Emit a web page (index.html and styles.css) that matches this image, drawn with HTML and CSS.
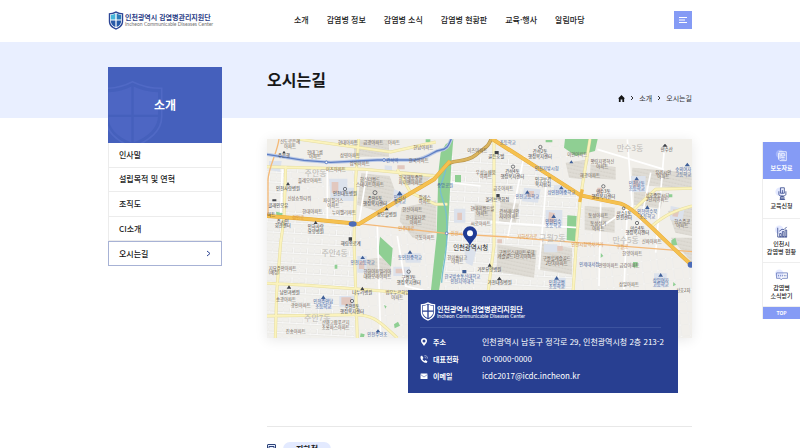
FILE: index.html
```html
<!DOCTYPE html>
<html lang="ko">
<head>
<meta charset="utf-8">
<meta name="viewport" content="width=device-width, initial-scale=1">
<title>오시는길 - 인천광역시 감염병관리지원단</title>
<link rel="stylesheet" href="styles.css">
</head>
<body>
<header class="header">
  <div class="container header-inner">
    <a class="logo" href="#">
      <svg class="logo-mark" viewBox="0 0 48 58" aria-hidden="true">
        <path d="M24 1C17 5 9 7 2 7v24c0 13 9 21 22 26 13-5 22-13 22-26V7C39 7 31 5 24 1z" fill="#2c4596"/>
        <path d="M24 5C18 8 12 10 6 10v20c0 11 7 18 18 23 11-5 18-12 18-23V10C36 10 30 8 24 5z" fill="#fff"/>
        <path d="M22 8C18 10 13 12 8 12v14h14z" fill="#45b5d9"/>
        <path d="M26 8c4 2 9 4 14 4v14H26z" fill="#2d7cba"/>
        <path d="M8 29h14v20C13 45 8 38 8 29z" fill="#2a5aa8"/>
        <path d="M26 29h14c0 9-5 16-14 20z" fill="#2459a8"/>
      </svg>
      <span class="logo-text"><strong>인천광역시 감염병관리지원단</strong><small>Incheon Communicable Diseases Center</small></span>
    </a>
    <nav class="gnb" aria-label="주메뉴">
      <a href="#">소개</a>
      <a href="#">감염병 정보</a>
      <a href="#">감염병 소식</a>
      <a href="#">감염병 현황판</a>
      <a href="#">교육·행사</a>
      <a href="#">알림마당</a>
    </nav>
    <button class="menu-button" type="button" aria-label="전체메뉴">
      <svg viewBox="0 0 18 18" aria-hidden="true"><path d="M5 6.500h8M5 9h6M5 11.500h8" stroke="#fff" fill="none"/></svg>
    </button>
  </div>
</header>

<div class="page">
  <div class="container columns">
    <aside class="side">
      <h2 class="side-title">
        <svg class="side-shield" viewBox="0 0 170 190" aria-hidden="true">
          <path d="M73 5C50 17 22 25-8 25v85c0 45 30 72 81 94 51-22 88-49 88-94V25C128 25 97 17 73 5z" fill="none" stroke="#5069c5" stroke-width="5"/>
          <path d="M73 18C52 29 27 36 0 37v69c0 38 24 64 73 84 49-20 77-46 77-84V37C120 36 96 29 73 18z" fill="#4d66c3"/>
          <path d="M73 18v180M0 108h150" stroke="#4560bc" stroke-width="7"/>
        </svg>
        <span>소개</span>
      </h2>
      <ul class="side-menu">
        <li><a href="#">인사말</a></li>
        <li><a href="#">설립목적 및 연혁</a></li>
        <li><a href="#">조직도</a></li>
        <li><a href="#">CI소개</a></li>
        <li><a class="current" href="#" aria-current="page">오시는길
          <svg viewBox="0 0 5 7" aria-hidden="true"><path d="M1 1l3 2.500L1 6" fill="none" stroke="#2e4593"/></svg></a></li>
      </ul>
    </aside>

    <main class="main">
      <div class="page-head">
        <h1>오시는길</h1>
        <nav class="crumbs" aria-label="현재 위치">
          <a href="#" aria-label="홈"><svg class="home" viewBox="0 0 8 8" aria-hidden="true"><path d="M4 0L0 4h1v4h2V5h2v3h2V4h1z" fill="#151515"/></svg></a>
          <svg class="sep" viewBox="0 0 4 6" aria-hidden="true"><path d="M1 1l2 2-2 2" fill="none" stroke="#333"/></svg>
          <a href="#">소개</a>
          <svg class="sep" viewBox="0 0 4 6" aria-hidden="true"><path d="M1 1l2 2-2 2" fill="none" stroke="#333"/></svg>
          <span>오시는길</span>
        </nav>
      </div>

      <svg class="map" viewBox="9 9 1275 597" role="img" aria-label="인천광역시청 주변 지도">
        <defs>
          <pattern id="blocks" width="42" height="30" patternUnits="userSpaceOnUse" patternTransform="rotate(3)">
            <rect width="42" height="30" fill="#f1f0ec"/>
            <path d="M0 0h42M0 0v30M22 0v16M0 16h42" stroke="#dad9d4" stroke-width="5"/>
            <path d="M0 0h42M0 0v30M22 0v16M0 16h42" stroke="#fff" stroke-width="3"/>
          </pattern>
          <pattern id="blocks-tilt" width="46" height="34" patternUnits="userSpaceOnUse" patternTransform="rotate(-7)">
            <rect width="46" height="34" fill="#f1efeb"/>
            <path d="M0 0h46M0 0v34M20 0v34" stroke="#dddbd5" stroke-width="5"/>
            <path d="M0 0h46M0 0v34M20 0v34" stroke="#fff" stroke-width="3"/>
          </pattern>
          <pattern id="estate" width="9" height="11" patternUnits="userSpaceOnUse" patternTransform="rotate(12)">
            <rect width="9" height="11" fill="#dfdcd5"/><rect width="6" height="3" x="1" y="2" fill="#d3cfc7"/>
          </pattern>
        </defs>
        <rect x="9" y="9" width="1275" height="597" fill="#f1efea"/>
        <path d="M9 100H270V606H9z" fill="url(#blocks)"/>
        <path d="M270 270L520 300L500 606H270z" fill="url(#blocks-tilt)"/>
        <path d="M560 60L690 20L960 190L930 460H540z" fill="url(#blocks)"/>
        <path d="M960 190L1080 205L1284 380V606H920z" fill="url(#blocks-tilt)"/>
        <path d="M700 20L905 9L980 90L960 170z" fill="url(#blocks-tilt)"/>
        <path d="M60 110L270 112V230L60 225z" fill="url(#blocks-tilt)"/>
        <g fill="url(#estate)">
          <path d="M292 112l85 8 22 60-60 46-60-20zM405 105l105 8-35 35-55-5zM412 215l105-22v95l-70 18-40-50zM270 12h105v50H270z"/>
          <path d="M905 80l70-10-20 60-40-5zM1105 95l178 15v50l-180-15zM710 195l55 8-10 62-50-10zM962 210l90 5v75l-90-8zM1110 165l90 8-10 45-80-12zM1212 225l72-15v90l-50-10zM632 205l55 8v40h-55z"/>
          <path d="M700 325l118 18-8 82-112-18zM832 322l92 14v80l-95-14zM305 370l72-8 5 55-78 8zM980 85l75 8v38l-78-5zM1220 305h64v75z"/>
        </g>
        <g fill="#dce2ec">
          <path d="M15 75h38l-5 32-33-5zM195 128h55v60h-50zM238 155h36v40h-36zM362 88l22 2v18h-22zM570 218h34v42h-34zM390 160l40 15-30 40-15-15z"/>
          <path d="M780 155l50 5-8 40-48-4zM845 222h50v52h-50zM1100 120h45v48h-48zM1220 210l42 8-8 40-36-6zM870 148h40v28h-42z"/>
          <path d="M280 360h28v50h-28zM388 392h50v28h-50zM165 485h38v34h-38zM226 480h50v32h-50zM870 425h35v30h-35zM1170 412h38v42h-38zM600 330h40l-15 60-20-10zM420 352h50v28h-45zM840 325h40v24h-40z"/>
        </g>
        <g fill="#e2c8bf">
          <path d="M203 138h20v32h-20zM400 88h22v12h-22zM580 230h14v22h-14zM855 228l18 4-3 30-18-4zM1228 220l18 3-5 20-16-2zM790 165h20v18h-20zM1108 132h15v20h-15zM285 375h16v24h-16zM395 398h26v14h-26zM232 484h30v22h-30zM880 330h16v14h-16zM1000 155h14v18h-14zM700 310h14v12h-14z"/>
        </g>
        <g fill="#8fcf93">
          <path d="M530 50L545 25L568 9L562 80L551 300L524 470H500L518 300L523 110z"/>
          <path d="M903 9h98l-8 36-58 15-35-25zM910 238l28 2-4 76-26-4zM348 302l38 35-5 55-38-40z"/>
          <path d="M573 117h18v22h-18zM36 227l20 4-2 14h-16zM485 10h14v8h-14zM1222 313l12-8 6 22-18 2zM845 12h20v7h-20zM212 386h8v12h-8zM390 565l12-8 6 12-16 8zM1107 378h14v16h-14zM360 507l8 4-4 7zM1215 175h10v9h-10zM290 592l12 3-2 8h-12zM1228 438l8 8-9 5zM1010 350l8 10-9 6z"/>
        </g>
        <g fill="none" stroke="#fff" stroke-width="5">
          <path d="M55 100l-5 130M190 95v155M310 100l-25 160M340 270l10 340M400 300l25 150 80 20M560 140l90 10M640 255l300 20M780 60l-50 250M850 100l-25 300M1000 40l200 60M1090 10l15 200-90 60M1160 110l-30 150M1200 50l-25 300M1010 200l-5 250M1090 220l-10 240"/>
        </g>
        <g fill="none" stroke="#e5dda1" stroke-width="9">
          <path d="M284 9L275 130L270 315L280 606M65 90L60 250L50 320L38 470L34 606M100 9L380 48L515 18M9 92L300 100L515 120M9 442L130 448L270 458L440 472M9 540L270 536C330 535 350 560 400 606M400 100L440 170L515 205L550 205"/>
          <path d="M690 9V330L672 470M978 9L950 180L937 320L927 470M1284 157L1175 160L1110 220M1284 210C1230 225 1205 235 1158 275"/>
        </g>
        <g fill="none" stroke="#fbf3bd" stroke-width="6">
          <path d="M284 9L275 130L270 315L280 606M65 90L60 250L50 320L38 470L34 606M100 9L380 48L515 18M9 92L300 100L515 120M9 442L130 448L270 458L440 472M9 540L270 536C330 535 350 560 400 606M400 100L440 170L515 205L550 205"/>
          <path d="M690 9V330L672 470M978 9L950 180L937 320L927 470M1284 157L1175 160L1110 220M1284 210C1230 225 1205 235 1158 275"/>
        </g>
        <path d="M45 9C40 50 15 90 12 130V240M285 263L545 292L730 303L980 323L1284 347" fill="none" stroke="#f4b978" stroke-width="4"/>
        <path d="M9 55L120 73L200 79L340 72L450 72C500 65 505 45 530 42S555 20 562 9" fill="none" stroke="#b9c8e6" stroke-width="10"/>
        <path d="M9 55L120 73L200 79L340 72L450 72C500 65 505 45 530 42S555 20 562 9" fill="none" stroke="#5f7fc4" stroke-width="4"/>
        <path d="M547 88C545 130 523 140 530 170S550 210 549 290S535 390 533 440" fill="none" stroke="#78bfd0" stroke-width="4"/>
        <path d="M540 95C560 65 600 85 635 57S670 35 682 9" fill="none" stroke="#b8944a" stroke-width="11"/>
        <path d="M540 95C560 65 600 85 635 57S670 35 682 9" fill="none" stroke="#dab45d" stroke-width="7"/>
        <path d="M9 240L140 250L285 264L400 195L510 130L558 75M685 9L950 178L1070 203C1110 215 1180 295 1284 388" fill="none" stroke="#e6ab3c" stroke-width="12"/>
        <path d="M9 240L140 250L285 264L400 195L510 130L558 75M685 9L950 178L1070 203C1110 215 1180 295 1284 388" fill="none" stroke="#f5c150" stroke-width="9"/>
        <path d="M955 160l-8 38" stroke="#f0b848" stroke-width="10"/>
        <g fill="#4c6cb8"><ellipse cx="266" cy="264" rx="12" ry="8"/><circle cx="1280" cy="386" r="9"/></g>
        <g fill="#fff" stroke="#5f7fc4" stroke-width="3"><circle cx="360" cy="72" r="4"/><circle cx="187" cy="79" r="4"/><circle cx="548" cy="292" r="4"/></g>
        <g class="map-dong">
          <text x="155" y="120">주안동</text><text x="212" y="360">주안4동</text><text x="160" y="556">주안7동</text>
          <text x="1098" y="46">만수3동</text><text x="865" y="316">구월2동</text><text x="1085" y="320">만수5동</text>
        </g>
        <g class="map-label">
          <text x="78" y="21">신도로은혜</text><text x="78" y="35">아파트</text><text x="153" y="53">현대그룹</text><text x="153" y="67">아파트</text><text x="258" y="64">삼영아파트</text><text x="252" y="25">현대아파트</text><text x="328" y="25">금광아파트</text><text x="390" y="23">아파트</text><text x="478" y="38">한남아파트</text><text x="464" y="79">한국아파트</text><text x="287" y="86">삼익아파트</text><text x="215" y="106">이츠아파트</text><text x="640" y="48">이츠아파트</text>
          <text x="138" y="139">플레오아파트</text><text x="318" y="135">한신더월드</text><text x="318" y="149">스테이트아파트</text><text x="440" y="129">한국해동중앙</text><text x="440" y="143">파이앤아파트</text><text x="106" y="191">신성쇼핑타워</text><text x="208" y="198">파이팔리스</text><text x="208" y="212">아파트</text><text x="482" y="188">팔레스</text><text x="482" y="202">아파트</text><text x="145" y="230">한대아파트</text><text x="240" y="235">누이팰리파트</text><text x="445" y="224">한신아파트</text><text x="455" y="250">한대홈타운</text><text x="455" y="264">아파트</text><text x="482" y="308">극동아파트</text>
          <text x="665" y="113">우성늘채움</text><text x="665" y="127">아파트</text><text x="718" y="161">금호아파트</text><text x="655" y="222">현대미월드힐</text><text x="655" y="236">아파트</text><text x="736" y="231">간석래미안</text><text x="736" y="245">자이아파트</text><text x="650" y="268">씨로아파트</text><text x="940" y="60">이안아파트</text><text x="1015" y="82">평림지웰혁신</text><text x="1015" y="96">아파트</text><text x="978" y="122">해광아파트</text><text x="1198" y="113">유레시안</text><text x="1198" y="127">아파트</text><text x="1180" y="182">성호중앙시티</text><text x="1180" y="196">2단지아파트</text><text x="1003" y="243">동성아파트</text><text x="1003" y="268">동성상가</text><text x="1003" y="282">아파트</text><text x="1255" y="260">한수주공</text><text x="1255" y="274">아파트</text>
          <text x="56" y="401">지요주안아파트</text><text x="30" y="415">(예정)</text><text x="340" y="411">한화아파밀리아</text><text x="340" y="425">대화오래아파트</text><text x="400" y="475">범우누르하임</text><text x="400" y="489">아파트</text><text x="66" y="494">송광아파트</text><text x="110" y="512">광인아파트</text><text x="215" y="564">신화고합푸르지</text><text x="215" y="578">초롱파스아파트</text><text x="95" y="590">진송아파트</text><text x="580" y="368">한미홀타고</text><text x="580" y="382">아파트</text>
          <text x="758" y="353">구월힐스테이트롯데</text><text x="758" y="367">캐슬골드1단지아파트</text><text x="878" y="372">구월힐캐슬골드</text><text x="878" y="386">2단지아파트</text><text x="1105" y="356">한양아파트</text><text x="1065" y="394">안영아파트 금강아파트</text><text x="1163" y="320">신파아파트</text><text x="1095" y="450">삼일아파트</text><text x="1258" y="467">산호2차</text>
        </g>
        <g class="map-place">
          <text x="60" y="64">주은행</text><text x="72" y="163">인천사랑병원</text><text x="43" y="212">클래인오유</text><text x="56" y="260">주시민</text><text x="56" y="274">회관센터</text><text x="22" y="240">마트</text><text x="155" y="277">인하사랑</text><text x="155" y="291">요양병원</text><text x="243" y="178">인천대동병원</text><text x="333" y="192">주안6동</text><text x="333" y="206">행정복지센터</text><text x="368" y="241">성모힐병원</text><text x="697" y="66">골든호텔</text><text x="828" y="51">간석2동</text><text x="828" y="65">행정복지센터</text><text x="745" y="112">간석4동</text><text x="745" y="126">행정복지센터</text><text x="837" y="136">인구보건</text><text x="837" y="150">복지협회</text><text x="700" y="195">올리브백화점</text><text x="1018" y="172">만수3동</text><text x="1018" y="186">행정복지센터</text><text x="1080" y="236">만수1동</text><text x="1080" y="250">안전센터</text><text x="1120" y="281">만수4동</text><text x="1120" y="295">행정복지센터</text><text x="1208" y="44">만수산</text>
          <text x="260" y="326">해림종로계</text><text x="434" y="430">구월3동</text><text x="434" y="444">행정복지센터</text><text x="77" y="473">남인과병원</text><text x="295" y="475">나누리병원</text><text x="264" y="516">주안8동</text><text x="264" y="530">행정복지센터</text><text x="676" y="404">가온요양병원</text><text x="707" y="444">가천대길병원</text>
        </g>
        <g class="map-school">
          <text x="407" y="188">인천시</text><text x="407" y="202">중학교</text><text x="731" y="24">초등학교</text><text x="848" y="103">인천지방시청</text><text x="892" y="173">상인천여중학교</text><text x="790" y="187">인천고등학교</text><text x="868" y="260">인천인수</text><text x="868" y="274">초등학교</text><text x="1118" y="147">인천남동</text><text x="1118" y="161">초등학교</text><text x="1150" y="232">인천만수북</text><text x="1150" y="246">초등학교</text><text x="1258" y="105">숭의여자</text><text x="1258" y="119">고등학교</text><text x="296" y="383">인천고등학교</text><text x="438" y="368">동인천중학교</text><text x="178" y="501">인천주안남</text><text x="178" y="515">초등학교</text><text x="595" y="426">한국방송통신대학교</text><text x="595" y="440">인천지역대학</text><text x="976" y="389">인제대서점</text><text x="878" y="443">인천구월</text><text x="878" y="457">초등학교</text><text x="1190" y="437">상일여자</text><text x="1190" y="451">고등학교</text><text x="340" y="601">인천주안초</text><text x="385" y="78">간석역</text><text x="543" y="152">중앙공원</text>
        </g>
        <g class="map-road"><text x="102" y="250">경인로</text><text x="427" y="282">인주대로</text><text x="790" y="305">지하상가로</text><text x="970" y="329">인천시청역사거리</text><text x="1075" y="337">구월로</text><text x="590" y="298">인천시청역</text></g>
        <g fill="#3f4248"><path d="M72 138l6 10H66zM155 254l6 10h-12zM25 190h12v6H25zM368 214l6 9h-12zM60 44l5 8H55zM692 45h12v9h-12zM697 174h10v10h-10zM1203 23l8 9h-16zM75 448l7 10H68zM295 452l6 10h-12zM677 382l6 10h-12zM706 422l7 10h-14zM254 304h10v10h-10z"/><g fill="none" stroke="#3f4248" stroke-width="2"><circle cx="333" cy="170" r="6"/><circle cx="243" cy="159" r="5"/><circle cx="829" cy="33" r="5"/><circle cx="747" cy="92" r="5"/><circle cx="1018" cy="151" r="5"/><circle cx="1119" cy="261" r="5"/><circle cx="1079" cy="217" r="4"/><circle cx="434" cy="407" r="5"/><circle cx="264" cy="495" r="5"/></g></g>
        <g fill="#3f5f98"><path d="M407 165l9 13h-18zM790 163l7 10h-14zM892 150l7 10h-14zM869 235l7 11h-14zM922 73l6 9h-12zM1118 122l7 11h-14zM1150 208l7 11h-14zM1270 80l8 11h-16zM296 359l7 10h-14zM438 343l7 10h-14zM178 478l7 11h-14zM595 402h12v10h-12zM878 420l7 11h-14zM1190 411l7 11h-14zM342 580l7 9h-14z"/></g>
        <text class="map-target" x="620" y="341">인천광역시청</text>
        <path d="M618 329C611 312 597 306 597 292a21 21 0 0 1 42 0C639 306 625 312 618 329z" fill="#1f3b95"/>
        <circle cx="618" cy="292" r="9" fill="#fff"/>
      </svg>

      <section class="contact">
        <div class="logo logo-light">
          <svg class="logo-mark" viewBox="0 0 48 58" aria-hidden="true">
            <path d="M24 1C17 5 9 7 2 7v24c0 13 9 21 22 26 13-5 22-13 22-26V7C39 7 31 5 24 1z" fill="#fff"/>
            <path d="M24 5C18 8 12 10 6 10v20c0 11 7 18 18 23 11-5 18-12 18-23V10C36 10 30 8 24 5z" fill="#283f91"/>
            <path d="M22 8C18 10 13 12 8 12v14h14zM26 8c4 2 9 4 14 4v14H26zM8 30h14v19C13 45 8 38 8 30zM26 30h14c0 8-5 15-14 19z" fill="#fff"/>
          </svg>
          <span class="logo-text"><strong>인천광역시 감염병관리지원단</strong><small>Incheon Communicable Diseases Center</small></span>
        </div>
        <dl class="contact-list">
          <div><dt><svg viewBox="0 0 16 16" aria-hidden="true"><path fill-rule="evenodd" d="M8 0a6 6 0 0 0-6 6c0 4 4 6 6 10 2-4 6-6 6-10a6 6 0 0 0-6-6zm0 3a3 3 0 1 1 0 6 3 3 0 0 1 0-6z" fill="#fff"/></svg>주소</dt><dd>인천광역시 남동구 정각로 29, 인천광역시청 2층 213-2</dd></div>
          <div><dt><svg viewBox="0 0 16 16" aria-hidden="true"><path d="M1 3l3-2 3 5-2 2c1 2 2 3 4 4l2-2 4 3-2 3C7 16 0 10 1 3z" fill="#fff"/><path d="M9 4c2 0 3 1 3 3M9 1c4 0 6 2 6 6" fill="none" stroke="#fff"/></svg>대표전화</dt><dd>00-0000-0000</dd></div>
          <div><dt><svg viewBox="0 0 16 16" aria-hidden="true"><rect y="3" x="1" width="14" height="11" rx="1" fill="#fff"/><path d="M1 5l7 5 7-5" fill="none" stroke="#283f91"/></svg>이메일</dt><dd>icdc2017@icdc.incheon.kr</dd></div>
        </dl>
      </section>

      <section class="transit">
        <svg viewBox="0 0 18 20" aria-hidden="true"><rect x="1" y="1" width="16" height="15" rx="1" fill="#e9efff" stroke="#2c4278" stroke-width="2"/><path d="M4 5h10v5H4zM3 13h3M12 13h3M4 16l-2 4M14 16l2 4" fill="none" stroke="#2c4278" stroke-width="2"/></svg>
        <h2>지하철</h2>
      </section>
    </main>
  </div>
</div>

<nav class="quick" aria-label="빠른 메뉴">
  <a class="quick-on" href="#"><svg viewBox="0 0 36 36" aria-hidden="true"><circle cx="13" cy="13" r="11" fill="#a3b5fb"/><path d="M10 7h19v23H13l-4-4V11h4v15M16 12h9v6h-9zM16 22h9M16 26h9" fill="none" stroke="#fff" stroke-width="2"/></svg>보도자료</a>
  <a href="#"><svg viewBox="0 0 36 36" aria-hidden="true"><circle cx="12" cy="12" r="11" fill="#e4e9ff"/><path d="M14 2h10v14H14zM10 11v8c0 3 3 4 8 4s10-1 10-4v-8M19 8v8M18 23v8M12 32h14M14 25h9v6h-9z" fill="none" stroke="#2d4187" stroke-width="2"/></svg>교육신청</a>
  <a href="#"><svg viewBox="0 0 36 36" aria-hidden="true"><circle cx="11" cy="12" r="11" fill="#e4e9ff"/><path d="M7 7v24h24M12 22h4v8h-4zM19 17h4v13h-4zM26 13h4v17h-4zM11 16l7-5 5 1 7-7" fill="none" stroke="#2d4187" stroke-width="2"/></svg><span>인천시<br>감염병 현황</span></a>
  <a href="#"><svg viewBox="0 0 36 36" aria-hidden="true"><circle cx="11" cy="12" r="11" fill="#e4e9ff"/><path d="M4 10h28v14H19l-3 4-3-4H4zM9 15v4M14 15v4M19 15v4M24 15v4M28 15v4" fill="none" stroke="#6376ba" stroke-width="2"/></svg><span>감염병<br>소식받기</span></a>
  <a class="quick-top" href="#">TOP</a>
</nav>
</body>
</html>
```
FILE: styles.css
```css
* {
  box-sizing: border-box;
}

body {
  margin: 0;
  overflow-x: hidden;
  background: #fff;
  color: #222;
  font: 8px/12px "Noto Sans CJK KR", "Noto Sans", sans-serif;
}

h1, h2, ul, dl, dd {
  margin: 0;
  padding: 0;
}

a {
  color: inherit;
  text-decoration: none;
}

svg {
  display: block;
}

.container {
  width: 73%;
  margin: 0 auto;
}

.header-inner {
  display: flex;
  align-items: center;
  height: 42px;
  padding-bottom: 2px;
}

.logo {
  display: flex;
  flex: none;
  align-items: center;
  gap: 1px;
  min-width: 110px;
  color: #2b3d86;
}

.logo-mark {
  width: 16px;
  height: 19px;
}

.logo-text {
  display: flex;
  flex-direction: column;
  white-space: nowrap;
}

.logo-text strong {
  font-size: 7px;
  line-height: 8px;
}

.logo-text small {
  color: #707070;
  font: 5px/6px Lato, "Liberation Sans", sans-serif;
}

.gnb {
  display: flex;
  flex: 1;
  gap: 18px;
  margin-left: 76px;
  font-weight: 500;
  white-space: nowrap;
}

.menu-button {
  width: 18px;
  height: 18px;
  padding: 0;
  border: 0;
  background: #859bf5;
}

.page {
  background: linear-gradient(#e9efff 76px, #fff 76px);
}

.columns {
  display: grid;
  grid-template-columns: 114px 1fr;
  align-items: start;
  gap: 45px;
}

.side {
  margin-top: 25px;
}

.side-title {
  display: grid;
  place-items: center;
  height: 76px;
  overflow: hidden;
  background: #4560bc;
  color: #fff;
  font-size: 12px;
  line-height: 18px;
}

.side-title > * {
  grid-area: 1 / 1;
}

.side-shield {
  align-self: end;
  justify-self: start;
  width: 57px;
  height: 63px;
}

.side-menu {
  display: grid;
  grid-auto-rows: 1fr;
  min-height: 123px;
  list-style: none;
}

.side-menu a {
  display: flex;
  align-items: center;
  justify-content: space-between;
  height: 100%;
  padding: 0 10px;
  border: 1px solid #ececec;
  border-top: 0;
  font-weight: 500;
}

.side-menu .current {
  border: 1px solid #a7b2d5;
  color: #111;
}

.side-menu svg {
  width: 5px;
  height: 7px;
}

.main {
  min-width: 0;
}

.page-head {
  height: 76px;
  padding-top: 25px;
}

h1 {
  color: #171717;
  font-size: 16px;
  line-height: 24px;
}

.crumbs {
  display: flex;
  align-items: center;
  justify-content: flex-end;
  gap: 5px;
  color: #333;
  font-size: 7px;
  line-height: 14px;
}

.home {
  width: 7px;
  height: 7px;
}

.sep {
  width: 4px;
  height: 6px;
}

.map {
  width: 100%;
  height: auto;
  margin-top: 21px;
  box-shadow: 0 2px 12px #00000018;
}

.map text {
  font-size: 13px;
  text-anchor: middle;
}

.map-label {
  fill: #6b5d54;
}

.map-place {
  fill: #40403f;
}

.map-school {
  fill: #40619c;
}

.map-road {
  fill: #d99241;
}

.map .map-dong text {
  fill: #bcbab6;
  font-size: 24px;
}

.map .map-target {
  fill: #262626;
  font-size: 19px;
}

.contact {
  position: relative;
  width: 270px;
  margin: -48px 14px 0 auto;
  padding: 12px 17px 9px 12px;
  background: #283f91;
  color: #fff;
}

.logo-light {
  padding-bottom: 6px;
  border-bottom: 1px solid #3c539f;
  color: #fff;
}

.logo-light small {
  color: #fff;
}

.contact-list {
  padding-top: 5px;
}

.contact-list div {
  display: grid;
  grid-template-columns: 62px 1fr;
  align-items: center;
  height: 17px;
  white-space: nowrap;
}

.contact-list dt {
  display: flex;
  align-items: center;
  gap: 5px;
  font-size: 7px;
  font-weight: 700;
}

.contact-list svg {
  width: 8px;
  height: 8px;
}

.transit {
  display: flex;
  gap: 7px;
  margin-top: 33px;
  padding: 15px 0 24px;
  border-top: 1px solid #e8e8e8;
}

.transit svg {
  width: 9px;
  height: 10px;
  margin-top: 2px;
}

.transit h2 {
  padding: 0 13px;
  border-radius: 8px;
  background: #e3eaff;
  font-size: 8px;
  line-height: 14px;
}

.quick {
  position: fixed;
  top: 142px;
  right: 0;
  width: 38px;
  border-left: 1px solid #eee;
  background: #fff;
  font-size: 6px;
  font-weight: 500;
  line-height: 8px;
  text-align: center;
  white-space: nowrap;
}

.quick a {
  display: flex;
  flex-direction: column;
  align-items: center;
  justify-content: center;
  min-height: 40px;
  padding: 6px 0;
  border-bottom: 1px solid #eee;
}

.quick svg {
  width: 14px;
  height: 14px;
  margin-bottom: 1px;
}

.quick .quick-on {
  min-height: 37px;
  border: 0;
  background: #859bf5;
  color: #fff;
  font-weight: 700;
}

.quick .quick-top {
  min-height: 12px;
  padding: 2px 0;
  border: 0;
  background: #859bf5;
  color: #fff;
  font-size: 5px;
  font-weight: 700;
}
```
